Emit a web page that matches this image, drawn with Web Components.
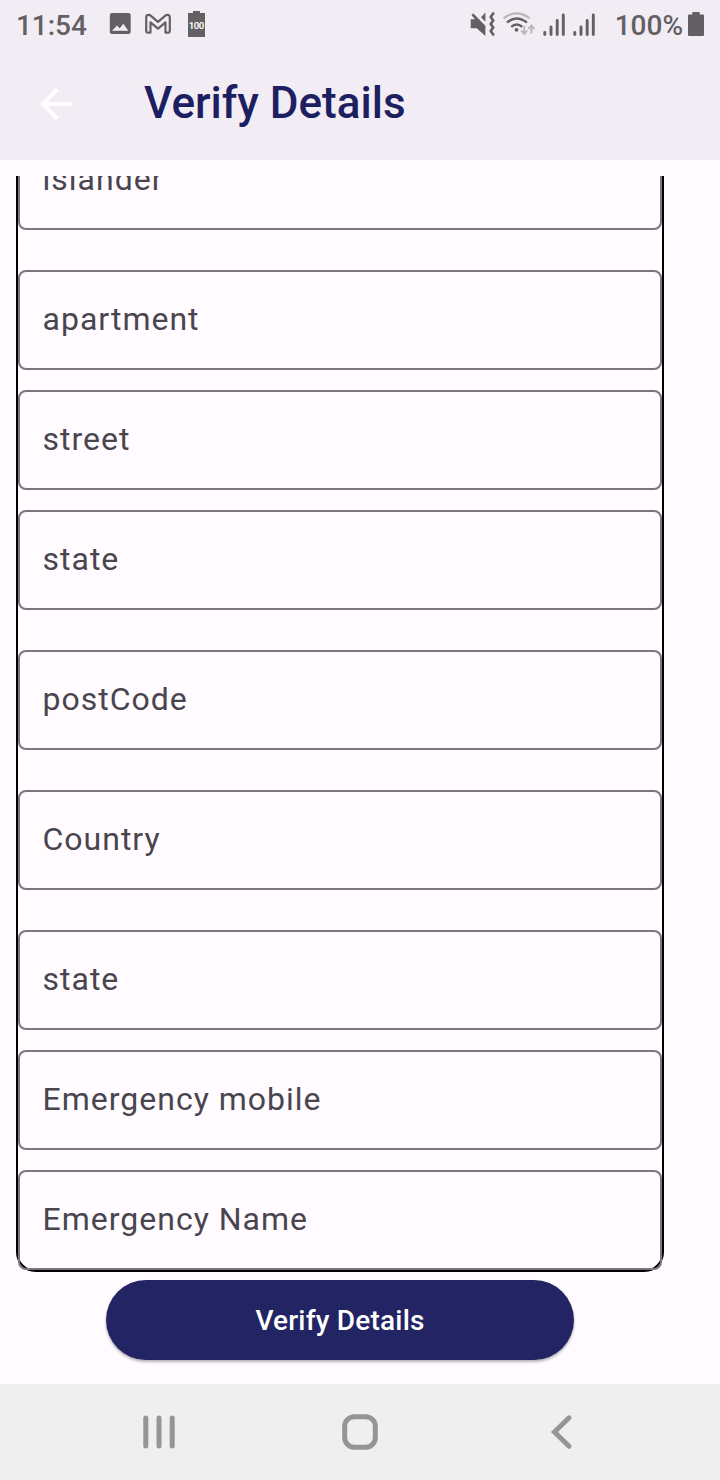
<!DOCTYPE html>
<html lang="en">
<head>
<meta charset="utf-8">
<title>Verify Details</title>
<style>
body{margin:0;font-family:Roboto,"Noto Sans",sans-serif;background:#fffbff}
</style>
</head>
<body>
<verify-screen></verify-screen>
<script>
const define=(name,html)=>{
  const t=document.createElement('template');
  t.innerHTML=html;
  customElements.define(name,class extends HTMLElement{
    constructor(){super();this.attachShadow({mode:'open'}).append(t.content.cloneNode(true));}
  });
};

define('status-bar',`
<style>
:host{display:flex;height:48px;box-sizing:border-box;padding:0 16px;justify-content:space-between;color:#636063;font-size:28px;font-weight:500;line-height:51px;white-space:pre}
div{display:flex}
svg{display:block;height:48px;fill:#636063}
.time{width:88px;letter-spacing:-.05px}
.pct{width:87px;box-sizing:border-box;text-align:right;padding-right:5px;letter-spacing:0}
.ln{fill:none;stroke:#636063;stroke-linecap:round}
</style>
<div>
  <span class="time">11:54</span>
  <svg width="36" viewBox="104 0 36 48"><path fill-rule="evenodd" d="M112 13h16.500q2.200 0 2.200 2.200v16.600q0 2.200-2.200 2.200H112q-2.200 0-2.200-2.200V15.200q0-2.200 2.200-2.200zM112 30.800h16.300l-5-7-3.700 4.700-2.500-3z"/></svg>
  <svg width="40" viewBox="140 -0.300 40 48"><path class="ln" stroke-width="2.200" stroke-linejoin="round" d="M146.200 31V17q0-2.500 2.500-2.500 1.200 0 2.200 1l7.100 6.100 7.100-6.100q1-1 2.200-1 2.500 0 2.500 2.500v14q0 1.300-1.300 1.300h-3V22l-7.500 6.300-7.500-6.300v10.300h-3q-1.300 0-1.300-1.300z"/></svg>
  <svg width="32" viewBox="180 0 32 48"><path d="M188 13h5v-2h7v2h5v24h-17z"/><text x="196.500" y="29.200" text-anchor="middle" fill="#fff" font-size="9.600" font-weight="600" textLength="15.500">100</text></svg>
</div>
<div>
  <svg width="32" viewBox="468 0 32 48"><path d="M470.700 19.200h4.300l-3.500-4 1.700-2 12.200 12.600V36l-8.700-7.800h-6zM485.400 12.500v9.300l-4.400-4.600z"/><path class="ln" stroke-width="2.700" stroke-linejoin="round" d="M493.200 13.500l-2.500 3.500 2.500 3.500-2.500 3.500 2.500 3.500-2.500 3.500 2.500 3.500"/></svg>
  <svg width="40" viewBox="500 0 40 48"><path fill="none" stroke="#bab6ba" stroke-width="2.200" d="M503.500 18.400q6-5 13-5t13 5"/><path class="ln" stroke-width="2.400" style="stroke-linecap:butt" d="M507 22.500q4.500-4 9.500-4t10.500 4M511.200 26.800q2.500-2.300 5.500-2.300t5.500 2.300"/><circle cx="516.500" cy="29.800" r="1.900"/><path fill="none" stroke="#bab6ba" stroke-width="1.900" d="M524.200 26v8m-3-3.500 3 3.500 3-3.500M531.400 33.500v-8m-3 3.500 3-3.500 3 3.500"/></svg>
  <svg width="30" viewBox="540 0 30 48"><path class="ln" stroke-width="2.900" d="M544.800 32.500v2M551 27v7.500M557.200 20.500v14M563.300 15v19.500"/></svg>
  <svg width="31" viewBox="570 0 31 48"><path class="ln" stroke-width="2.900" d="M574.800 32.500v2M581 27v7.500M587.200 20.500v14M593.300 15v19.500"/></svg>
  <span class="pct">100%</span>
  <svg width="16" viewBox="688 0 16 48"><path d="M689 14.500h3.300V12h7.400v2.500h3.300q1 0 1 1V35q0 1-1 1h-14q-1 0-1-1V15.500q0-1 1-1z"/></svg>
</div>`);

define('app-bar',`
<style>
:host{display:flex;align-items:center;height:112px;padding-left:32px}
svg{display:block;width:48px;height:48px;fill:#fff}
h1{margin:0 0 0 64px;font-size:44px;line-height:56px;font-weight:500;color:#1c2060;padding-bottom:2px;white-space:nowrap}
</style>
<svg viewBox="0 0 24 24"><path d="M20 11H7.830l5.590-5.590L12 4l-8 8 8 8 1.410-1.410L7.830 13H20z"/></svg>
<h1><slot></slot></h1>`);

define('text-field',`
<style>
:host{display:flex;align-items:center;flex:none;height:100px;box-sizing:border-box;border:2px solid #7b757f;border-radius:8px;padding:0 22.500px;font-size:32px;line-height:48px;letter-spacing:1px;color:#49454f;white-space:nowrap}
span{padding-bottom:2px}
</style>
<span><slot></slot></span>`);

define('details-form',`
<style>
:host{display:flex;flex-direction:column;justify-content:flex-end;width:648px;height:1096px;overflow:hidden}
.frame{display:flex;flex:none;flex-direction:column;gap:20px;box-sizing:border-box;border:2px solid #000;border-radius:20px;padding-top:20px}
</style>
<div class="frame"><slot></slot></div>`);

define('pill-button',`
<style>
:host{display:block;width:468px}
button{display:block;width:100%;height:80px;border:0;border-radius:40px;padding:2px 0 0;background:#232463;color:#fff;font:500 28px/78px Roboto,sans-serif;letter-spacing:.2px;box-shadow:0 2px 3px #0000004d}
</style>
<button><slot></slot></button>`);

define('nav-bar',`
<style>
:host{display:flex;height:96px;background:#efefef;justify-content:center;gap:153px}
svg{width:48px;height:96px;fill:none;stroke:#959595;stroke-width:5;stroke-linecap:round}
</style>
<svg viewBox="135 1384 48 96"><path d="M145.800 1418v28M159 1418v28M172.200 1418v28"/></svg>
<svg viewBox="336 1384 48 96"><rect x="344.700" y="1416.700" width="30.600" height="30.600" rx="9.500"/></svg>
<svg viewBox="537 1384 48 96"><path d="M569 1417.800l-14.500 14.200 14.500 14.200"/></svg>`);

define('verify-screen',`
<style>
:host{display:flex;flex-direction:column;height:1480px;width:720px;overflow:hidden}
header{background:#f2edf5}
main{flex:1;display:flex;flex-direction:column;align-items:center;width:648px;padding:16px 16px 0;gap:8px}
.gap{margin-top:20px}
</style>
<header><status-bar></status-bar><app-bar>Verify Details</app-bar></header>
<main>
<details-form>
<text-field>islander</text-field>
<text-field class="gap">apartment</text-field>
<text-field>street</text-field>
<text-field>state</text-field>
<text-field class="gap">postCode</text-field>
<text-field class="gap">Country</text-field>
<text-field class="gap">state</text-field>
<text-field>Emergency mobile</text-field>
<text-field>Emergency Name</text-field>
</details-form>
<pill-button>Verify Details</pill-button>
</main>
<nav-bar></nav-bar>`);
</script>
</body>
</html>
